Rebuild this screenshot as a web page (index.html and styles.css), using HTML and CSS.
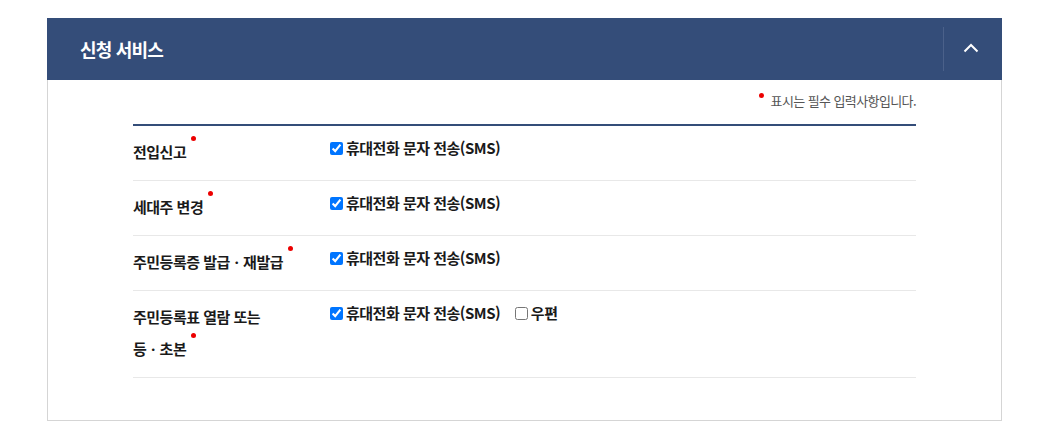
FILE: index.html
```html
<!DOCTYPE html>
<html lang="ko">
<head>
  <meta charset="UTF-8" />
  <meta name="viewport" content="width=device-width, initial-scale=1.0"/>
  <title>신청 서비스</title>
  <link rel="stylesheet" href="styles.css">
</head>
<body>

  <section class="apply_box">
    <div class="apply_box__head">
      <h2 class="apply_box__title">신청 서비스</h2>
      <button type="button" class="apply_box__toggle" aria-label="접기">
        <svg width="16" height="10" viewBox="0 0 16 10">
          <path d="M1.5 8.5 L8 2 L14.5 8.5" fill="none" stroke="#fff" stroke-width="2"/>
        </svg>
      </button>
    </div>

    <div class="apply_box__body">
      <p class="apply_box__note"><span class="req_dot"></span>표시는 필수 입력사항입니다.</p>

      <table class="apply_table">
        <tbody>
          <tr>
            <th><span class="req">전입신고</span></th>
            <td>
              <label class="chk"><input type="checkbox" checked>휴대전화 문자 전송(SMS)</label>
            </td>
          </tr>
          <tr>
            <th><span class="req">세대주 변경</span></th>
            <td>
              <label class="chk"><input type="checkbox" checked>휴대전화 문자 전송(SMS)</label>
            </td>
          </tr>
          <tr>
            <th><span class="req">주민등록증 발급ㆍ재발급</span></th>
            <td>
              <label class="chk"><input type="checkbox" checked>휴대전화 문자 전송(SMS)</label>
            </td>
          </tr>
          <tr>
            <th>주민등록표 열람 또는 <span class="req nowrap">등ㆍ초본</span></th>
            <td>
              <label class="chk"><input type="checkbox" checked>휴대전화 문자 전송(SMS)</label>
              <label class="chk"><input type="checkbox">우편</label>
            </td>
          </tr>
        </tbody>
      </table>
    </div>
  </section>

</body>
</html>
```

FILE: styles.css
```css
/* ── 기본 ── */
html, body { margin:0; padding:0; }
body {
  background:#fff;
  font-family:"Noto Sans CJK KR", "Noto Sans", sans-serif;
  color:#1a1a1a;
}
.nowrap { white-space:nowrap; }

/* ── 신청 서비스 박스 ── */
.apply_box {
  width:955px;
  margin:18px 0 0 47px;
  border:1px solid #d5d5d5;
  border-top:0;
  box-sizing:border-box;
}
.apply_box__head {
  display:flex;
  align-items:center;
  height:62px;
  margin:0 -1px;
  background:#344d79;
}
.apply_box__title {
  flex:1;
  margin:0;
  padding-left:33px;
  font-size:18px;
  font-weight:700;
  letter-spacing:-0.8px;
  color:#fff;
}
.apply_box__toggle {
  display:flex;
  align-items:center;
  justify-content:center;
  width:59px;
  height:44px;
  padding:0 4px 2px 0;
  border:0;
  border-left:1px solid #4b618a;
  background:transparent;
  cursor:pointer;
}

.apply_box__body {
  padding:11px 85px 42px;
}
.apply_box__note {
  margin:0 0 13px;
  text-align:right;
  font-size:13px;
  line-height:20px;
  letter-spacing:-0.6px;
  color:#555;
}

/* ── 필수 표시 ── */
.req_dot,
.req::after {
  display:inline-block;
  width:5px;
  height:5px;
  border-radius:50%;
  background:#ec0000;
  vertical-align:top;
}
.req_dot { margin:2px 7px 0 0; }
.req::after {
  content:"";
  margin-left:5px;
}

/* ── 표 ── */
.apply_table {
  width:100%;
  border-collapse:collapse;
  border-top:2px solid #344d79;
}
.apply_table th,
.apply_table td {
  padding:10px 0 12px;
  border-bottom:1px solid #e8e8e8;
  vertical-align:top;
  text-align:left;
  font-size:15px;
  font-weight:700;
  letter-spacing:-0.5px;
}
.apply_table th {
  width:160px;
  padding-right:36px;
  line-height:32px;
}
.apply_table td { line-height:24px; }

.chk {
  display:inline-flex;
  align-items:center;
  margin-right:10px;
  cursor:pointer;
}
.chk input {
  width:13px;
  height:13px;
  margin:0 3px 0 1px;
}
```
